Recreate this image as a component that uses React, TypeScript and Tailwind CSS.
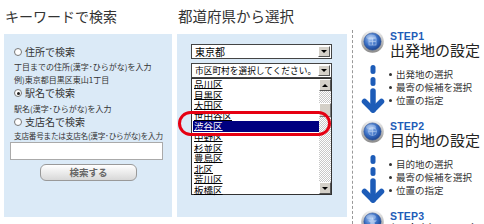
import { ReactNode } from 'react';

const JP = "font-['Noto_Sans_CJK_JP','Noto_Sans',sans-serif]";

const WARDS = ['品川区', '目黒区', '大田区', '世田谷区', '渋谷区', '中野区', '杉並区', '豊島区', '北区', '荒川区', '板橋区'];

function Radio({ checked }: { checked?: boolean }) {
  return (
    <span className="relative inline-block h-[8px] w-[8px] shrink-0 rounded-full border border-[#777] bg-white">
      {checked && <span className="absolute left-[1.5px] top-[1.5px] h-[3px] w-[3px] rounded-full bg-[#222]" />}
    </span>
  );
}

function DownBtn() {
  return (
    <span className="flex h-[11px] w-[12px] items-center justify-center border border-t-white border-l-white border-r-[#555] border-b-[#555] bg-[#d4d0c8]">
      <span className="h-0 w-0 border-x-[3px] border-t-[3px] border-x-transparent border-t-black" />
    </span>
  );
}

function Select({ children, small }: { children: ReactNode; small?: boolean }) {
  return (
    <div className="flex h-[15px] w-[141px] items-center justify-between border border-[#444] bg-white pl-[3px] pr-[1px]">
      <span className={`${small ? 'text-[8.7px]' : 'text-[10px]'} leading-[12px] text-black`}>{children}</span>
      <DownBtn />
    </div>
  );
}

function StepIcon({ id }: { id: number }) {
  return (
    <svg width="23" height="23" viewBox="0 0 23 23" className="shrink-0">
      <defs>
        <linearGradient id={`ring${id}`} x1="0" y1="0" x2="0" y2="1">
          <stop offset="0" stopColor="#f4f4f4" />
          <stop offset="1" stopColor="#8a8a8a" />
        </linearGradient>
        <radialGradient id={`core${id}`} cx="0.4" cy="0.35" r="0.7">
          <stop offset="0" stopColor="#a8c8f5" />
          <stop offset="0.55" stopColor="#3a6fc4" />
          <stop offset="1" stopColor="#173f8c" />
        </radialGradient>
      </defs>
      <circle cx="11.5" cy="11.5" r="11.3" fill={`url(#ring${id})`} />
      <circle cx="11.5" cy="11.5" r="8.6" fill={`url(#core${id})`} stroke="#2a4f94" strokeWidth="0.6" />
      {id === 1 && (
        <g stroke="#c9dbf7" strokeWidth="0.7" fill="none" opacity="0.8">
          <rect x="8" y="8" width="7" height="7" />
          <path d="M8 11.5H15M11.5 8V15" />
        </g>
      )}
      {id === 2 && (
        <g stroke="#c9dbf7" strokeWidth="0.7" fill="none" opacity="0.7">
          <circle cx="11.5" cy="11.5" r="4" />
          <path d="M7.5 11.5H15.5M11.5 7.5V15.5" />
        </g>
      )}
      {id === 3 && (
        <path d="M11.5 7L12.8 10.3L16 10.5L13.5 12.6L14.3 16L11.5 14.2L8.7 16L9.5 12.6L7 10.5L10.2 10.3Z" fill="#c9dbf7" opacity="0.7" />
      )}
      <ellipse cx="10" cy="7" rx="5" ry="2.5" fill="white" opacity="0.25" />
    </svg>
  );
}

function Arrow() {
  return (
    <svg width="24" height="49" viewBox="0 0 24 49" className="shrink-0">
      <g fill="#1d5cb8">
        <rect x="9.5" y="0" width="5" height="9" rx="2.5" />
        <rect x="9.5" y="12" width="5" height="9" rx="2.5" />
      </g>
      <g stroke="#1d5cb8" strokeWidth="5.5" strokeLinecap="round" strokeLinejoin="round" fill="none">
        <path d="M12 26V45" />
        <path d="M3.5 36.5L12 45L20.5 36.5" />
      </g>
    </svg>
  );
}

function Step({ id, title, items }: { id: number; title: string; items: string[] }) {
  return (
    <div className="h-[90px]">
      <div className="flex h-[23px] items-start">
        <StepIcon id={id} />
        <div className="ml-[6px] flex flex-col">
          <span className="font-['Liberation_Sans',Arial,sans-serif] text-[10.5px] font-bold leading-[12px] tracking-[0.2px] text-[#1d5cb8]">
            STEP{id}
          </span>
          <span className="text-[15px] leading-[15px] text-[#222]">{title}</span>
        </div>
      </div>
      <div className="flex">
        <div className="mt-[12px]">
          <Arrow />
        </div>
        <ul className="ml-[4px] mt-[15px] flex flex-col">
          {items.map((t) => (
            <li key={t} className="flex h-[13px] items-center gap-[4px] text-[9.5px] leading-[13px] text-[#333]">
              <span className="h-[3px] w-[3px] rounded-full bg-[#333]" />
              {t}
            </li>
          ))}
        </ul>
      </div>
    </div>
  );
}

export default function App() {
  return (
    <div className={`relative flex h-[224px] w-[484px] overflow-hidden bg-white ${JP}`}>
      {/* キーワード検索 */}
      <div className="ml-[4px] w-[168px]">
        <div className="h-[34px] pl-[1px] pt-[8px] text-[14px] leading-[16px] text-[#333]">キーワードで検索</div>
        <div className="h-[183px] bg-[#dbeaf7] pl-[10px] pt-[12px] text-[#333]">
          <div className="flex h-[12px] items-center gap-[3px] text-[10px] leading-[12px]">
            <Radio />
            住所で検索
          </div>
          <div className="mt-[2px] h-[14px] text-[8px] leading-[14px]">丁目までの住所(漢字･ひらがな)を入力</div>
          <div className="h-[12px] text-[8px] leading-[12px]">例)東京都目黒区東山1丁目</div>
          <div className="flex h-[14px] items-center gap-[3px] text-[10px] leading-[14px]">
            <Radio checked />
            駅名で検索
          </div>
          <div className="mt-[2px] h-[14px] text-[8px] leading-[14px]">駅名(漢字･ひらがな)を入力</div>
          <div className="flex h-[12px] items-center gap-[3px] text-[10px] leading-[12px]">
            <Radio />
            支店名で検索
          </div>
          <div className="mt-[2px] h-[12px] text-[7.6px] leading-[12px] tracking-[-0.2px]">支店番号または支店名(漢字･ひらがな)を入力</div>
          <div className="ml-[-4px] h-[18px] w-[153px] border border-[#aaa] bg-white" />
          <div className="ml-[26px] mt-[4px] flex h-[17px] w-[97px] items-center justify-center rounded-[6px] border border-[#999] bg-gradient-to-b from-white to-[#d8d8d8] text-[9.5px] font-bold text-[#666]">
            検索する
          </div>
        </div>
      </div>

      {/* 都道府県から選択 */}
      <div className="ml-[5px] w-[170px]">
        <div className="h-[34px] pl-[1px] pt-[8px] text-[14.5px] leading-[16px] text-[#333]">都道府県から選択</div>
        <div className="relative h-[183px] bg-[#dbeaf7] pl-[14px] pt-[10px]">
          <Select>東京都</Select>
          <div className="mt-[4px]">
            <Select small>市区町村を選択してください。</Select>
          </div>
          <div className="flex h-[117px] w-[141px] border border-[#333] bg-white">
            <ul className="flex-1 pl-[1px]">
              {WARDS.map((w) => (
                <li
                  key={w}
                  className={`h-[10.6px] overflow-hidden pl-[1px] text-[9.5px] leading-[10.6px] underline decoration-[0.5px] underline-offset-[0px] ${
                    w === '渋谷区' ? 'bg-[#000080] text-white' : 'text-black'
                  }`}
                >
                  {w}
                </li>
              ))}
            </ul>
            <div className="flex w-[12px] flex-col">
              <span className="flex h-[12px] items-center justify-center border border-t-white border-l-white border-r-[#555] border-b-[#555] bg-[#d4d0c8]">
                <span className="h-0 w-0 border-x-[3px] border-b-[3px] border-x-transparent border-b-black" />
              </span>
              <span className="h-[12px] bg-[repeating-conic-gradient(#c8c8c8_0_25%,#ffffff_0_50%)] bg-[length:2px_2px]" />
              <span className="h-[14px] border border-t-white border-l-white border-r-[#777] border-b-[#777] bg-[#d4d0c8]" />
              <span className="flex-1 bg-[repeating-conic-gradient(#c8c8c8_0_25%,#ffffff_0_50%)] bg-[length:2px_2px]" />
              <span className="flex h-[12px] items-center justify-center border border-t-white border-l-white border-r-[#555] border-b-[#555] bg-[#d4d0c8]">
                <span className="h-0 w-0 border-x-[3px] border-t-[3px] border-x-transparent border-t-black" />
              </span>
            </div>
          </div>
          {/* 強調の赤枠 */}
          <div className="absolute left-[1px] top-[77px] h-[25px] w-[153px] rounded-[13px] border-[3px] border-[#e60012]" />
        </div>
      </div>

      {/* ステップ */}
      <div className="ml-[5px] mt-[30px] flex-1 border-l border-dashed border-[#999] pl-[8px]">
        <Step id={1} title="出発地の設定" items={['出発地の選択', '最寄の候補を選択', '位置の指定']} />
        <Step id={2} title="目的地の設定" items={['目的地の選択', '最寄の候補を選択', '位置の指定']} />
        <Step id={3} title="経由地の設定" items={[]} />
      </div>
    </div>
  );
}
